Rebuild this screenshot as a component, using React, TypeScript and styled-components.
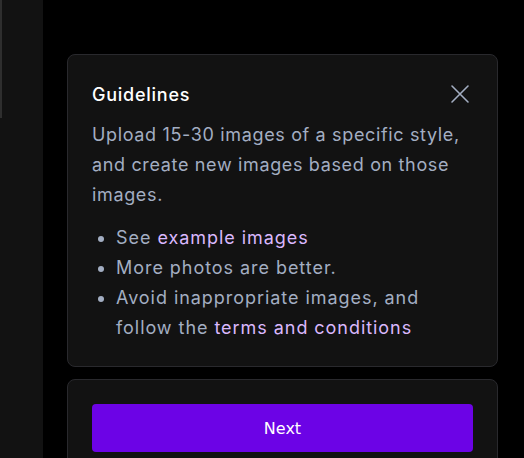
import * as React from "react";
import styled, { createGlobalStyle } from "styled-components";

const GlobalStyle = createGlobalStyle`
  html, body {
    margin: 0;
    padding: 0;
    background: #000;
    height: 100%;
    overflow: hidden;
  }
  #root {
    height: 100%;
  }
`;

const Page = styled.div`
  display: flex;
  height: 458px;
  font-family: Inter, "Noto Sans", sans-serif;
`;

const Sidebar = styled.div`
  position: relative;
  width: 43px;
  flex-shrink: 0;
  background: #121212;
`;

const ScrollThumb = styled.div`
  position: absolute;
  left: 0;
  top: 0;
  width: 2px;
  height: 118px;
  background: #2e2e2e;
`;

const Main = styled.div`
  flex: 1;
  display: flex;
  flex-direction: column;
  gap: 12px;
  padding: 54px 26px 0 24px;
`;

const Card = styled.div`
  background: #121212;
  border: 1px solid #29292d;
  border-radius: 8px;
  padding: 24px 24px 23px;
`;

const Header = styled.div`
  display: flex;
  align-items: center;
  justify-content: space-between;
  height: 30px;
  margin-bottom: 11px;
`;

const Title = styled.h2`
  margin: 0;
  font-size: 18px;
  font-weight: 500;
  letter-spacing: 0.75px;
  color: #fff;
`;

const CloseButton = styled.button`
  display: flex;
  align-items: center;
  justify-content: center;
  background: none;
  border: none;
  padding: 0;
  margin-right: 3px;
  color: #a3aec2;
  cursor: pointer;
`;

const Text = styled.p`
  margin: 0 0 13px;
  font-size: 18px;
  line-height: 30px;
  letter-spacing: 0.65px;
  color: #a3aec2;
`;

const List = styled.ul`
  margin: 0;
  padding-left: 24px;
  font-size: 18px;
  line-height: 30px;
  letter-spacing: 0.95px;
  color: #a3aec2;
`;

const Link = styled.a`
  color: #dab8fd;
  text-decoration: none;
`;

const NextButton = styled.button`
  width: 100%;
  height: 48px;
  border: none;
  border-radius: 4px;
  background: #6c03e6;
  color: #fff;
  font-family: "DejaVu Sans", Verdana, sans-serif;
  font-size: 16px;
  cursor: pointer;
`;

const CloseIcon = () => (
  <svg width="20" height="20" viewBox="0 0 20 20" fill="none" stroke="currentColor" strokeWidth="1.6" strokeLinecap="round">
    <path d="M2 2L18 18M18 2L2 18" />
  </svg>
);

export default function App() {
  return (
    <>
      <GlobalStyle />
      <Page>
        <Sidebar>
          <ScrollThumb />
        </Sidebar>
        <Main>
          <Card>
            <Header>
              <Title>Guidelines</Title>
              <CloseButton aria-label="Close">
                <CloseIcon />
              </CloseButton>
            </Header>
            <Text>
              Upload 15-30 images of a specific style, and create new images based on those images.
            </Text>
            <List>
              <li>
                See <Link href="#">example images</Link>
              </li>
              <li>More photos are better.</li>
              <li>
                Avoid inappropriate images, and follow the <Link href="#">terms and conditions</Link>
              </li>
            </List>
          </Card>
          <Card>
            <NextButton>Next</NextButton>
          </Card>
        </Main>
      </Page>
    </>
  );
}
